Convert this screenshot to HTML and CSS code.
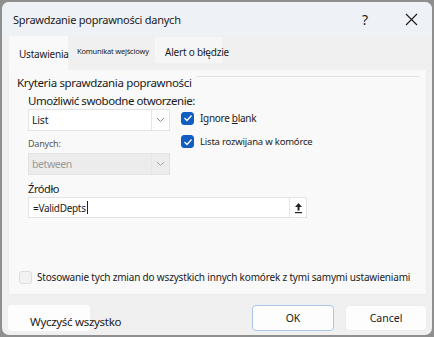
FILE: index.html
```html
<!DOCTYPE html>
<html lang="pl">
<head>
  <meta charset="UTF-8" />
  <title>Sprawdzanie poprawności danych</title>
  <link rel="stylesheet" href="styles.css">
</head>
<body>
  <div class="window">
    <div class="titlebar">
      <span class="title">Sprawdzanie poprawności danych</span>
      <span class="help">?</span>
      <span class="close">
        <svg width="13" height="13" viewBox="0 0 13 13"><path d="M1 1 L12 12 M12 1 L1 12" stroke="#1a1a1a" stroke-width="1.1" fill="none"/></svg>
      </span>
    </div>

    <div class="content">
      <div class="tabs">
        <div class="tab active">Ustawienia</div>
        <div class="tab tiny">Komunikat wejściowy</div>
        <div class="tab alert">Alert o błędzie</div>
      </div>

      <div class="panel">
        <div class="group-title">
          <span>Kryteria sprawdzania poprawności</span>
          <span class="rule"></span>
        </div>

        <div class="criteria">
          <div class="label-big">Umożliwić swobodne otworzenie:</div>
          <div class="row">
            <div class="col-left">
              <div class="select">
                <span class="value">List</span>
                <span class="arrow">
                  <svg width="9" height="6" viewBox="0 0 9 6"><path d="M1 1 L4.5 4.5 L8 1" stroke="#8a8a8a" stroke-width="1" fill="none"/></svg>
                </span>
              </div>
              <div class="label-small">Danych:</div>
              <div class="select disabled">
                <span class="value">between</span>
                <span class="arrow">
                  <svg width="9" height="6" viewBox="0 0 9 6"><path d="M1 1 L4.5 4.5 L8 1" stroke="#a0a0a0" stroke-width="1" fill="none"/></svg>
                </span>
              </div>
            </div>
            <div class="col-right">
              <div class="check-row">
                <span class="box checked">
                  <svg width="10" height="8" viewBox="0 0 10 8"><path d="M1.5 4 L4 6.5 L8.5 1.5" stroke="#fff" stroke-width="1.3" fill="none"/></svg>
                </span>
                <span>Ignore <u>b</u>lank</span>
              </div>
              <div class="check-row">
                <span class="box checked">
                  <svg width="10" height="8" viewBox="0 0 10 8"><path d="M1.5 4 L4 6.5 L8.5 1.5" stroke="#fff" stroke-width="1.3" fill="none"/></svg>
                </span>
                <span class="narrow">Lista rozwijana w komórce</span>
              </div>
            </div>
          </div>

          <div class="label-mid">Źródło</div>
          <div class="source">
            <span class="value">=ValidDepts<span class="caret"></span></span>
            <span class="pick">
              <svg width="9" height="12" viewBox="0 0 9 12"><path d="M4.5 1 L1 5 H3.5 V8.5 H5.5 V5 H8 Z" fill="#222"/><rect x="1" y="10" width="7" height="1.2" fill="#222"/></svg>
            </span>
          </div>
        </div>

        <div class="apply">
          <span class="box"></span>
          <span>Stosowanie tych zmian do wszystkich innych komórek z tymi samymi ustawieniami</span>
        </div>
      </div>

      <div class="buttons">
        <div class="btn clear"><span>Wyczyść wszystko</span></div>
        <div class="spacer"></div>
        <div class="btn primary">OK</div>
        <div class="btn">Cancel</div>
      </div>
    </div>
  </div>
</body>
</html>
```

FILE: styles.css
```css
body {
  margin: 0;
  background-color: #8f8f8f;
  font-family: 'Noto Sans', 'Liberation Sans', sans-serif;
  color: #1b1b1b;
}
.window {
  margin: 2px;
  width: 430px;
  height: 333px;
  background-color: #f0f0f0;
  border-radius: 7px;
  overflow: hidden;
  display: flex;
  flex-direction: column;
}
.titlebar {
  height: 34px;
  background-color: #eef1f5;
  display: flex;
  align-items: center;
  padding-left: 9px;
}
.title {
  font-size: 11px;
  letter-spacing: -0.25px;
  padding-left: 2px;
  flex: 1;
}
.help {
  font-size: 14px;
  width: 20px;
  margin-right: 25px;
  text-align: center;
}
.close {
  width: 22px;
  margin-right: 10px;
  display: flex;
  justify-content: center;
}
.content {
  flex: 1;
  display: flex;
  flex-direction: column;
  padding: 0 5px 0 6px;
}
.tabs {
  display: flex;
  height: 34px;
  padding-left: 1px;
}
.tab {
  display: flex;
  align-items: center;
  box-sizing: border-box;
  letter-spacing: -0.2px;
  white-space: nowrap;
}
.tab.active {
  background-color: #f9f9f9;
  width: 59px;
  height: 34px;
  padding-left: 10px;
  padding-top: 2px;
  font-size: 10px;
}
.tab.tiny {
  width: 87px;
  height: 30px;
  padding-left: 9px;
  font-size: 7.5px;
}
.tab.alert {
  background-color: #f6f6f6;
  width: 67px;
  height: 26px;
  margin-top: 1px;
  padding-left: 10px;
  padding-top: 3px;
  font-size: 10px;
}
.panel {
  background-color: #f9f9f9;
  border: 1px solid #ececec;
  border-top: none;
  height: 225px;
  display: flex;
  flex-direction: column;
  padding: 4px 0 0 8px;
  box-sizing: border-box;
}
.group-title {
  display: flex;
  align-items: center;
  font-size: 11.5px;
  letter-spacing: -0.35px;
  height: 16px;
}
.group-title .rule {
  flex: 1;
  height: 1px;
  background-color: #e2e2e2;
  margin: 2px 6px 0 4px;
  align-self: flex-start;
}
.criteria {
  padding-left: 11px;
  display: flex;
  flex-direction: column;
}
.label-big {
  font-size: 11.5px;
  letter-spacing: -0.45px;
  margin-top: 3px;
  height: 15px;
  line-height: 15px;
}
.row {
  display: flex;
  margin-top: 1px;
}
.col-left {
  width: 142px;
  display: flex;
  flex-direction: column;
}
.select {
  height: 22px;
  box-sizing: border-box;
  background-color: #fff;
  border: 1px solid #e3e3e3;
  display: flex;
  align-items: center;
  font-size: 10.5px;
  letter-spacing: -0.2px;
}
.select .value {
  flex: 1;
  padding-left: 3px;
}
.select .arrow {
  width: 17px;
  height: 100%;
  border-left: 1px solid #e6e6e6;
  display: flex;
  align-items: center;
  justify-content: center;
}
.select.disabled {
  background-color: #ececec;
  color: #9a9a9a;
  letter-spacing: -0.4px;
}
.label-small {
  font-size: 9px;
  color: #555;
  height: 22px;
  line-height: 26px;
  letter-spacing: -0.2px;
}
.col-right {
  padding-left: 11px;
  display: flex;
  flex-direction: column;
  gap: 10px;
  padding-top: 2px;
}
.check-row {
  display: flex;
  align-items: center;
  gap: 6px;
  font-size: 10px;
  letter-spacing: -0.3px;
}
.check-row .narrow {
  font-size: 9.5px;
  letter-spacing: -0.2px;
}
.box {
  width: 13px;
  height: 13px;
  box-sizing: border-box;
  border-radius: 3px;
  border: 1px solid #d0d0d0;
  background-color: #f4f4f4;
  display: flex;
  align-items: center;
  justify-content: center;
  flex-shrink: 0;
}
.box.checked {
  background-color: #105fc0;
  border-color: #105fc0;
}
.label-mid {
  font-size: 11px;
  letter-spacing: -0.4px;
  margin-top: 6px;
  height: 16px;
  line-height: 16px;
}
.source {
  width: 279px;
  height: 21px;
  box-sizing: border-box;
  background-color: #fff;
  border: 1px solid #e3e3e3;
  display: flex;
  align-items: center;
  font-size: 10px;
  letter-spacing: -0.3px;
}
.source .value {
  flex: 1;
  padding-left: 4px;
  display: flex;
  align-items: center;
}
.caret {
  width: 1px;
  height: 13px;
  background-color: #222;
  margin-left: 1px;
}
.source .pick {
  width: 16px;
  height: 100%;
  border-left: 1px solid #e6e6e6;
  display: flex;
  align-items: center;
  justify-content: center;
}
.apply {
  display: flex;
  align-items: center;
  gap: 5px;
  margin-top: 52px;
  padding-left: 2px;
  font-size: 10px;
  letter-spacing: -0.18px;
}
.apply .box {
  background-color: #f2f2f2;
  border-color: #dedede;
}
.buttons {
  display: flex;
  align-items: center;
  margin-top: 10px;
  gap: 11px;
}
.btn {
  width: 82px;
  height: 26px;
  box-sizing: border-box;
  background-color: #fdfdfd;
  border: 1px solid #ececec;
  border-radius: 4px;
  display: flex;
  align-items: center;
  justify-content: center;
  font-size: 10.5px;
}
.btn.primary {
  border-color: #a9c6e4;
}
.btn.clear {
  justify-content: flex-start;
  padding-left: 22px;
  white-space: nowrap;
  font-size: 11.5px;
  letter-spacing: -0.3px;
  border: none;
  padding-top: 6px;
}
.spacer {
  flex: 1;
}
```
